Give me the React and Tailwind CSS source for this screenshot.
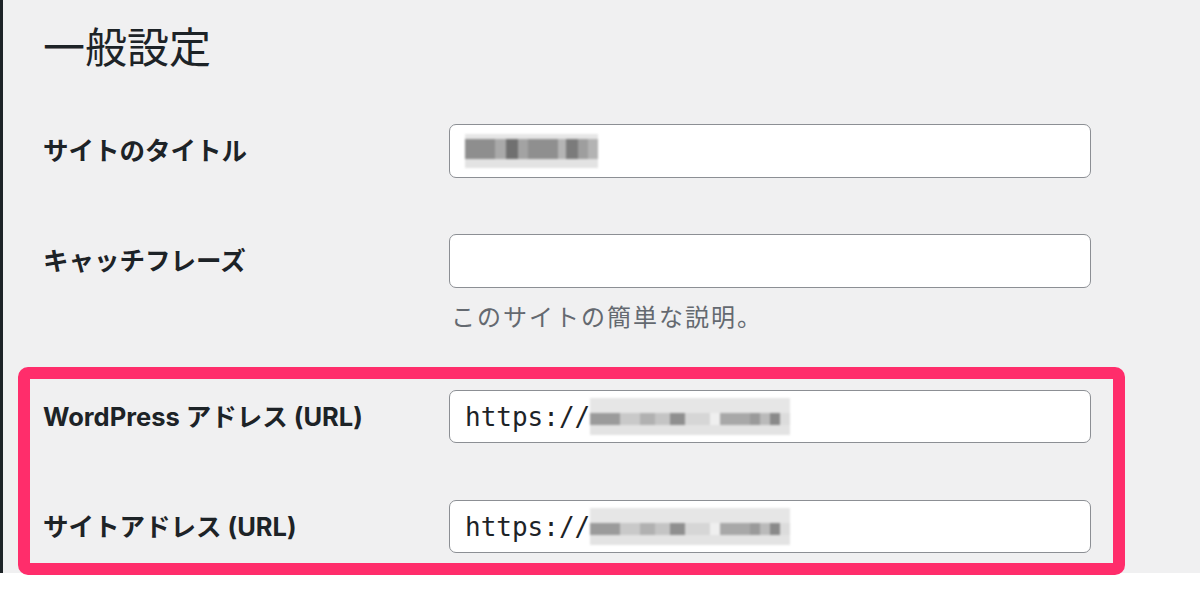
import React from "react";

const titleMosaic = [
  ["w-[30px]", "bg-[#8e8e8e]"],
  ["w-[11px]", "bg-[#a9a9a9]"],
  ["w-[12px]", "bg-[#707070]"],
  ["w-[10px]", "bg-[#a3a3a3]"],
  ["w-[30px]", "bg-[#8f8f8f]"],
  ["w-[8px]", "bg-[#b4b4b4]"],
  ["w-[12px]", "bg-[#7b7b7b]"],
  ["w-[10px]", "bg-[#9e9e9e]"],
  ["w-[10px]", "bg-[#b3b3b3]"],
];

const urlMosaic = [
  ["w-[30px]", "bg-[#9b9b9b]"],
  ["w-[20px]", "bg-[#c9c9c9]"],
  ["w-[15px]", "bg-[#b1b1b1]"],
  ["w-[15px]", "bg-[#c4c4c4]"],
  ["w-[15px]", "bg-[#8f8f8f]"],
  ["w-[25px]", "bg-[#d6d6d6]"],
  ["w-[10px]", "bg-[#efefef]"],
  ["w-[30px]", "bg-[#a8a8a8]"],
  ["w-[10px]", "bg-[#9a9a9a]"],
  ["w-[10px]", "bg-[#bababa]"],
  ["w-[10px]", "bg-[#8a8a8a]"],
  ["w-[10px]", "bg-[#dcdcdc]"],
];

const Mosaic = ({ cells, top, bottom, mid }) => (
  <div className="flex flex-col blur-[1px]">
    <div className={`${top} w-full bg-[#e6e6e6]`} />
    <div className="flex">
      {cells.map(([w, bg], i) => (
        <div key={i} className={`${w} ${mid} ${bg}`} />
      ))}
    </div>
    <div className={`${bottom} w-full bg-[#e3e3e3]`} />
  </div>
);

const Field = ({ children }) => (
  <div className="flex h-full w-[642px] items-center rounded-[7px] border-[1.5px] border-[#8c8f94] bg-white px-[15px]">
    {children}
  </div>
);

const Label = ({ children }) => (
  <div className="w-[406px] text-[25.5px] font-bold leading-[30px] text-[#1d2327]">
    {children}
  </div>
);

const UrlValue = () => (
  <div className="flex items-center">
    <span className="font-['DejaVu_Sans_Mono',monospace] text-[26px] leading-[30px] text-[#1d2327]">
      https://
    </span>
    <Mosaic cells={urlMosaic} top="h-[15px]" mid="h-[12px]" bottom="h-[10px]" />
  </div>
);

export default function App() {
  return (
    <div className="h-[600px] w-[1200px] bg-white font-['Inter','Noto_Sans_CJK_JP',sans-serif]">
      <div className="h-[573px] border-l-[3px] border-[#1d2327] bg-[#f0f0f1] pl-[15px]">
        <div className="pl-[25px]">
          <h1 className="pt-[23px] text-[42px] font-normal leading-[50px] text-[#1d2327]">
            一般設定
          </h1>

          <div className="mt-[51px] flex h-[54px] items-center">
            <Label>サイトのタイトル</Label>
            <Field>
              <Mosaic cells={titleMosaic} top="h-[5px]" mid="h-[20px]" bottom="h-[9px]" />
            </Field>
          </div>

          <div className="mt-[56px] flex h-[54px] items-center">
            <Label>キャッチフレーズ</Label>
            <Field />
          </div>
          <p className="mt-[15px] pl-[408px] text-[24px] leading-[30px] tracking-[2px] text-[#646970]">
            このサイトの簡単な説明。
          </p>
        </div>

        <div className="mt-[34px] h-[208px] w-[1107px] rounded-[10px] border-[12px] border-[#ff2d6b] pl-[13px] pt-[11px]">
          <div className="flex h-[53px] items-center">
            <Label>WordPress アドレス (URL)</Label>
            <Field>
              <UrlValue />
            </Field>
          </div>
          <div className="mt-[57px] flex h-[53px] items-center">
            <Label>サイトアドレス (URL)</Label>
            <Field>
              <UrlValue />
            </Field>
          </div>
        </div>
      </div>
    </div>
  );
}
